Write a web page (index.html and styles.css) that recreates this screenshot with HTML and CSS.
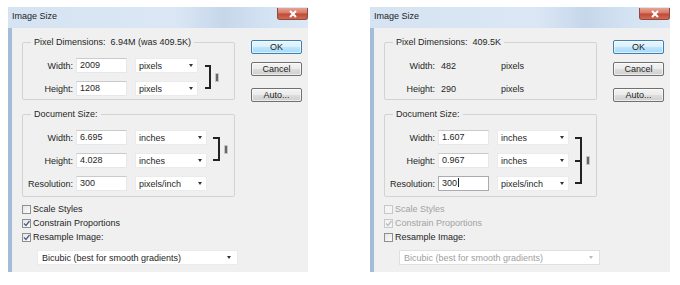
FILE: index.html
```html
<!DOCTYPE html>
<html lang="en">
<head>
    <meta charset="UTF-8">
    <title>Image Size</title>
    <link rel="stylesheet" href="styles.css">
</head>
<body>
    <div class="page">

        <!-- before: resample on -->
        <div class="dialog">
            <div class="titlebar">
                <span class="title">Image Size</span>
                <span class="close">
                    <svg width="10" height="8" viewBox="0 0 10 8"><path d="M2 1L8 7M8 1L2 7" stroke="#fff" stroke-width="2" fill="none"/></svg>
                </span>
            </div>
            <div class="body">
                <div class="main">
                    <div class="group">
                        <span class="group-title">Pixel Dimensions:&nbsp; 6.94M (was 409.5K)</span>
                        <div class="group-body">
                            <div class="linked">
                                <div class="rows">
                                    <div class="row"><span class="label">Width:</span><span class="field">2009</span><span class="select">pixels<i class="arrow"></i></span></div>
                                    <div class="row"><span class="label">Height:</span><span class="field">1208</span><span class="select">pixels<i class="arrow"></i></span></div>
                                </div>
                                <span class="bracket"></span>
                                <span class="chain"></span>
                            </div>
                        </div>
                    </div>

                    <div class="group doc">
                        <span class="group-title">Document Size:</span>
                        <div class="group-body">
                            <div class="rows">
                                <div class="linked">
                                    <div class="rows">
                                        <div class="row"><span class="label">Width:</span><span class="field">6.695</span><span class="select wide">inches<i class="arrow"></i></span></div>
                                        <div class="row"><span class="label">Height:</span><span class="field">4.028</span><span class="select wide">inches<i class="arrow"></i></span></div>
                                    </div>
                                    <span class="bracket"></span>
                                    <span class="chain"></span>
                                </div>
                                <div class="row"><span class="label">Resolution:</span><span class="field">300</span><span class="select wide">pixels/inch<i class="arrow"></i></span></div>
                            </div>
                        </div>
                    </div>

                    <div class="options">
                        <div class="check"><span class="box"></span>Scale Styles</div>
                        <div class="check"><span class="box on"><svg width="7" height="7" viewBox="0 0 7 7"><path d="M1 3.5L3 5.5L6.5 1" stroke="#4d6185" stroke-width="1.3" fill="none"/></svg></span>Constrain Proportions</div>
                        <div class="check"><span class="box on"><svg width="7" height="7" viewBox="0 0 7 7"><path d="M1 3.5L3 5.5L6.5 1" stroke="#4d6185" stroke-width="1.3" fill="none"/></svg></span>Resample Image:</div>
                    </div>
                    <div class="select method">Bicubic (best for smooth gradients)<i class="arrow"></i></div>
                </div>
                <div class="buttons">
                    <span class="btn default">OK</span>
                    <span class="btn">Cancel</span>
                    <span class="btn auto">Auto...</span>
                </div>
            </div>
        </div>

        <!-- after: resample off -->
        <div class="dialog">
            <div class="titlebar">
                <span class="title">Image Size</span>
                <span class="close">
                    <svg width="10" height="8" viewBox="0 0 10 8"><path d="M2 1L8 7M8 1L2 7" stroke="#fff" stroke-width="2" fill="none"/></svg>
                </span>
            </div>
            <div class="body">
                <div class="main">
                    <div class="group">
                        <span class="group-title">Pixel Dimensions:&nbsp; 409.5K</span>
                        <div class="group-body">
                            <div class="rows">
                                <div class="row"><span class="label">Width:</span><span class="value">482</span><span class="unit">pixels</span></div>
                                <div class="row"><span class="label">Height:</span><span class="value">290</span><span class="unit">pixels</span></div>
                            </div>
                        </div>
                    </div>

                    <div class="group doc">
                        <span class="group-title">Document Size:</span>
                        <div class="group-body">
                            <div class="linked triple">
                                <div class="rows">
                                    <div class="row"><span class="label">Width:</span><span class="field">1.607</span><span class="select wide">inches<i class="arrow"></i></span></div>
                                    <div class="row"><span class="label">Height:</span><span class="field">0.967</span><span class="select wide">inches<i class="arrow"></i></span></div>
                                    <div class="row"><span class="label">Resolution:</span><span class="field focus">300<i class="caret"></i></span><span class="select wide">pixels/inch<i class="arrow"></i></span></div>
                                </div>
                                <span class="bracket"></span>
                                <span class="chain"></span>
                            </div>
                        </div>
                    </div>

                    <div class="options">
                        <div class="check disabled"><span class="box"></span>Scale Styles</div>
                        <div class="check disabled"><span class="box on"><svg width="7" height="7" viewBox="0 0 7 7"><path d="M1 3.5L3 5.5L6.5 1" stroke="#b4bcc8" stroke-width="1.3" fill="none"/></svg></span>Constrain Proportions</div>
                        <div class="check"><span class="box"></span>Resample Image:</div>
                    </div>
                    <div class="select method disabled">Bicubic (best for smooth gradients)<i class="arrow"></i></div>
                </div>
                <div class="buttons">
                    <span class="btn default">OK</span>
                    <span class="btn">Cancel</span>
                    <span class="btn auto">Auto...</span>
                </div>
            </div>
        </div>

    </div>
</body>
</html>
```

FILE: styles.css
```css
* {
    box-sizing: border-box;
}

body {
    margin: 0;
    background: #fff;
    font-family: "Liberation Sans", Arial, sans-serif;
    font-size: 9px;
    color: #262626;
}

.page {
    display: flex;
    gap: 62px;
    padding: 7px 0 0 8px;
}

.dialog {
    width: 300px;
    height: 265px;
    display: flex;
    flex-direction: column;
    background: #f0f0f0;
}

.titlebar {
    height: 21px;
    display: flex;
    justify-content: space-between;
    align-items: flex-start;
    padding-left: 4px;
    background: linear-gradient(to right, #d5e3f2 0%, #dbe7f4 55%, #c6d7eb 72%, #d3e2f2 85%, #dce8f5 100%);
}

.title {
    padding-top: 4px;
    line-height: 11px;
    color: #1c1c1c;
}

.close {
    width: 31px;
    height: 12px;
    margin-top: 1px;
    display: flex;
    align-items: center;
    justify-content: center;
    border: 1px solid #8b4a44;
    border-top: none;
    border-radius: 0 0 3px 3px;
    background: linear-gradient(#e8a493 0%, #d47a66 45%, #c24a36 55%, #d06a52 100%);
}

.body {
    flex: 1;
    display: flex;
    gap: 16px;
    padding: 12px 6px 4px 10px;
    border-left: 4px solid #a3bcda;
}

.main {
    width: 213px;
    padding-top: 2px;
}

.group {
    border: 1px solid #d3d3d3;
    border-radius: 2px;
}

.group.doc {
    margin-top: 14px;
}

.group-title {
    display: table;
    margin: -6px 0 0 8px;
    padding: 0 3px;
    line-height: 11px;
    background: #f0f0f0;
}

.group-body {
    padding: 10px 0 3px 0;
}

.group.doc .group-body {
    padding-bottom: 5px;
}

.rows {
    display: flex;
    flex-direction: column;
    gap: 8px;
}

.row {
    display: flex;
    align-items: center;
    height: 15px;
}

.label {
    width: 50px;
    margin-right: 3px;
    text-align: right;
}

.field {
    width: 51px;
    height: 15px;
    padding-left: 3px;
    line-height: 13px;
    background: #fff;
    border: 1px solid #e6e7ea;
    border-top-color: #c9cacd;
}

.field.focus {
    border-color: #a9abb1;
}

.caret {
    display: inline-block;
    width: 1px;
    height: 9px;
    margin-left: 1px;
    vertical-align: -1px;
    background: #222;
}

.value {
    width: 51px;
    padding-left: 3px;
}

.unit {
    margin-left: 12px;
}

.select {
    width: 63px;
    height: 15px;
    margin-left: 8px;
    display: flex;
    align-items: center;
    justify-content: space-between;
    padding: 0 4px 0 3px;
    background: #fff;
    border: 1px solid #ebebeb;
}

.select.wide {
    width: 72px;
}

.arrow {
    width: 0;
    height: 0;
    border-left: 2.5px solid transparent;
    border-right: 2.5px solid transparent;
    border-top: 3px solid #333;
}

.linked {
    display: flex;
    align-items: center;
}

.bracket {
    align-self: stretch;
    width: 6px;
    margin: 7px 0 7px 7px;
    border: 2px solid #222;
    border-left: none;
}

.group.doc .bracket {
    width: 7px;
    margin-left: 6px;
}

.linked.triple .bracket {
    position: relative;
}

.linked.triple .bracket::after {
    content: "";
    position: absolute;
    left: 0;
    top: 50%;
    width: 5px;
    margin-top: -1px;
    border-top: 2px solid #222;
}

.chain {
    width: 4px;
    height: 9px;
    margin-left: 4px;
    background: #666;
    border: 1px solid #c4c4c4;
    border-radius: 1px;
}

.options {
    margin-top: 5px;
}

.check {
    display: flex;
    align-items: center;
    height: 14px;
    gap: 2px;
}

.box {
    width: 9px;
    height: 9px;
    display: flex;
    align-items: center;
    justify-content: center;
    border: 1px solid #8e8f8f;
    background: linear-gradient(135deg, #e6e6e6, #fbfbfb);
}

.check.disabled {
    color: #a3a3a3;
}

.check.disabled .box {
    border-color: #c8c8c8;
    background: #f4f4f4;
}

.select.method {
    width: 201px;
    margin: 6px 0 0 15px;
    padding: 0 6px 0 4px;
}

.select.method.disabled {
    color: #a0a0a0;
    border-color: #e0e0e0;
}

.select.method.disabled .arrow {
    border-top-color: #bbb;
}

.buttons {
    width: 51px;
    display: flex;
    flex-direction: column;
}

.btn {
    height: 14px;
    margin-top: 8px;
    line-height: 12px;
    text-align: center;
    color: #1c1c1c;
    border: 1px solid #707070;
    border-radius: 2px;
    background: linear-gradient(#f3f3f3 0%, #ebebeb 50%, #dddddd 51%, #cfcfcf 100%);
    box-shadow: inset 0 0 0 1px rgba(255, 255, 255, 0.6);
}

.btn.default {
    margin-top: 0;
    border-color: #3c7fb1;
    background: linear-gradient(#eaf6fd 0%, #d9f0fc 50%, #bee6fd 51%, #a7d9f5 100%);
}

.btn.auto {
    margin-top: 12px;
}
```
